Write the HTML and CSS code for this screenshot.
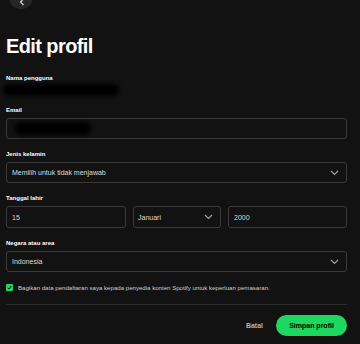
FILE: index.html
```html
<!DOCTYPE html>
<html>
<head>
    <title>Edit profil</title>
    <link rel="stylesheet" href="styles.css">
</head>
<body>
    <div class="page">
        <button class="back-button">
            <svg width="8" height="8" viewBox="0 0 8 8"><path d="M5.5 1 L2.5 4 L5.5 7" fill="none" stroke="#d0d0d0" stroke-width="1.3"/></svg>
        </button>

        <h1>Edit profil</h1>

        <div class="field">
            <label>Nama pengguna</label>
            <div class="redacted redacted-name"></div>
        </div>

        <div class="field">
            <label>Email</label>
            <div class="input-box">
                <div class="redacted redacted-email"></div>
            </div>
        </div>

        <div class="field">
            <label>Jenis kelamin</label>
            <div class="input-box select">
                <span>Memilih untuk tidak menjawab</span>
                <svg class="chevron" width="9" height="6" viewBox="0 0 9 6"><path d="M1 1 L4.5 4.5 L8 1" fill="none" stroke="#a0a0a0" stroke-width="1.2"/></svg>
            </div>
        </div>

        <div class="field">
            <label>Tanggal lahir</label>
            <div class="date-row">
                <div class="input-box day"><span>15</span></div>
                <div class="input-box select month">
                    <span>Januari</span>
                    <svg class="chevron" width="9" height="6" viewBox="0 0 9 6"><path d="M1 1 L4.5 4.5 L8 1" fill="none" stroke="#a0a0a0" stroke-width="1.2"/></svg>
                </div>
                <div class="input-box year"><span>2000</span></div>
            </div>
        </div>

        <div class="field">
            <label>Negara atau area</label>
            <div class="input-box select">
                <span>Indonesia</span>
                <svg class="chevron" width="9" height="6" viewBox="0 0 9 6"><path d="M1 1 L4.5 4.5 L8 1" fill="none" stroke="#a0a0a0" stroke-width="1.2"/></svg>
            </div>
        </div>

        <div class="consent">
            <span class="checkbox">
                <svg width="7" height="7" viewBox="0 0 7 7"><path d="M1.8 3.8 L3 5 L5.3 2" fill="none" stroke="#000" stroke-width="1"/></svg>
            </span>
            <span>Bagikan data pendaftaran saya kepada penyedia konten Spotify untuk keperluan pemasaran.</span>
        </div>

        <hr class="divider">

        <div class="actions">
            <button class="cancel-button">Batal</button>
            <button class="save-button">Simpan profil</button>
        </div>
    </div>
</body>
</html>
```

FILE: styles.css
```css
body {
    margin: 0;
    background-color: #121212;
    color: #ffffff;
    font-family: "Liberation Sans", Arial, sans-serif;
    overflow: hidden;
}

.page {
    padding: 0 13px 0 6px;
}

.back-button {
    display: flex;
    align-items: flex-end;
    justify-content: center;
    width: 24px;
    height: 24px;
    margin: -15px 0 0 -3px;
    padding: 0 0 3px 1px;
    border: none;
    border-radius: 50%;
    background-color: #262626;
    position: relative;
    left: 6px;
}

h1 {
    font-size: 20px;
    line-height: 24px;
    letter-spacing: -0.6px;
    font-weight: bold;
    margin: 25px 0 16px 0;
}

.field {
    display: flex;
    flex-direction: column;
    margin-bottom: 11px;
}

label {
    font-size: 6px;
    line-height: 8px;
    font-weight: bold;
    margin-bottom: 4px;
}

.redacted {
    background-color: #000000;
    filter: blur(2px);
    border-radius: 6px;
}

.redacted-name {
    width: 116px;
    height: 12px;
    margin: -2px 0 -1px -3px;
}

.redacted-email {
    width: 76px;
    height: 13px;
    margin-left: 3px;
}

.input-box {
    display: flex;
    align-items: center;
    height: 21px;
    box-sizing: border-box;
    border: 1px solid #3a3a3a;
    border-radius: 3px;
    padding: 0 5px;
    font-size: 7px;
    color: #dcdcdc;
}

.select {
    justify-content: space-between;
}

.chevron {
    margin-right: 2px;
}

.date-row {
    display: flex;
    gap: 7px;
}

.date-row .input-box {
    height: 22px;
}

.day {
    width: 120px;
}

.month {
    width: 88px;
    padding-left: 4px;
}

.year {
    flex: 1;
}

.consent {
    display: flex;
    align-items: center;
    gap: 5px;
    margin-top: 12px;
    font-size: 6.1px;
    color: #cfcfcf;
}

.checkbox {
    display: flex;
    align-items: center;
    justify-content: center;
    width: 7px;
    height: 7px;
    border-radius: 1px;
    background-color: #1ed760;
}

.divider {
    border: none;
    border-top: 1px solid #2a2a2a;
    margin: 13px 0 0 0;
}

.actions {
    display: flex;
    justify-content: flex-end;
    align-items: center;
    gap: 13px;
    margin-top: 10px;
}

.cancel-button {
    background: none;
    border: none;
    padding: 0;
    color: #b3b3b3;
    font-family: "Liberation Sans", Arial, sans-serif;
    font-size: 7px;
    font-weight: bold;
}

.save-button {
    width: 71px;
    height: 21px;
    border: none;
    border-radius: 11px;
    background-color: #1ed760;
    color: #000000;
    font-family: "Liberation Sans", Arial, sans-serif;
    font-size: 7px;
    font-weight: bold;
}
```
